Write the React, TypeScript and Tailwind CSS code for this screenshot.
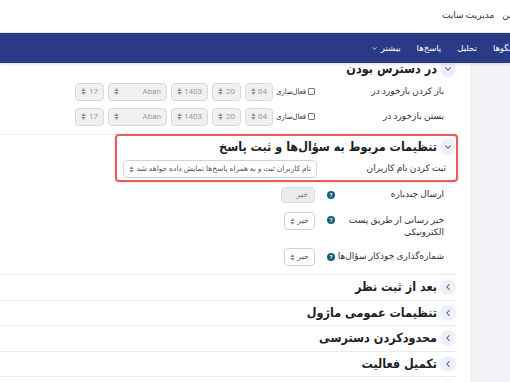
import { ChevronDown, ChevronLeft } from "lucide-react";

function Arrows() {
  return (
    <svg width="5" height="7" viewBox="0 0 5 7" className="shrink-0">
      <path d="M0.3 2.9 L2.5 0.3 L4.7 2.9 Z" fill="#8a8a8a" />
      <path d="M0.3 4.1 L2.5 6.7 L4.7 4.1 Z" fill="#8a8a8a" />
    </svg>
  );
}

function DateSelect({ value, width }: { value: string; width: string }) {
  return (
    <div
      className={`${width} h-[18px] shrink-0 flex items-center justify-between px-[5px] rounded-[4px] border border-[#d8dadd] bg-[#eff0f2] text-[8px] text-[#9c9c9c]`}
    >
      <span>{value}</span>
      <Arrows />
    </div>
  );
}

function SmallSelect({ value }: { value: string }) {
  return (
    <div className="w-[31px] h-[18px] shrink-0 flex items-center justify-between px-[5px] rounded-[4px] border border-[#cfd3d8] bg-white text-[8px] text-[#555]">
      <span>{value}</span>
      <Arrows />
    </div>
  );
}

function HelpIcon() {
  return (
    <span className="mr-auto w-[8px] h-[8px] rounded-full bg-[#17607a] text-white text-[6px] font-bold leading-none flex items-center justify-center">
      ?
    </span>
  );
}

function SectionHead({ title, open }: { title: string; open?: boolean }) {
  return (
    <div className="flex items-center gap-[3px]">
      <span className="w-[16px] h-[16px] rounded-full bg-[#eef0f7] flex items-center justify-center shrink-0">
        {open ? (
          <ChevronDown size={10} strokeWidth={2.5} color="#3b4a9e" />
        ) : (
          <ChevronLeft size={10} strokeWidth={2.5} color="#3b4a9e" />
        )}
      </span>
      <h3 className="text-[12.5px] font-bold text-[#1d2125] leading-none whitespace-nowrap font-['DejaVu_Sans_Condensed','DejaVu_Sans',sans-serif]">
        {title}
      </h3>
    </div>
  );
}

function DateRow({ label }: { label: string }) {
  return (
    <div className="h-[25px] flex items-center">
      <div className="w-[141px] shrink-0 pr-[12px] pl-[12px] text-[9px] text-[#333]">{label}</div>
      <div className="flex items-center gap-[4px]">
        <span className="w-[38px] shrink-0 flex items-center gap-[2px]">
          <span className="w-[7px] h-[7px] border border-[#777] rounded-[1px] bg-white shrink-0" />
          <span className="text-[7.5px] text-[#333] whitespace-nowrap font-['DejaVu_Sans_Condensed','DejaVu_Sans',sans-serif]">
            فعال‌سازی
          </span>
        </span>
        <DateSelect value="04" width="w-[28px]" />
        <DateSelect value="20" width="w-[29px]" />
        <DateSelect value="1403" width="w-[37px]" />
        <DateSelect value="Aban" width="w-[59px]" />
        <DateSelect value="17" width="w-[29px]" />
      </div>
    </div>
  );
}

const collapsed = ["بعد از ثبت نظر", "تنظیمات عمومی ماژول", "محدودکردن دسترسی", "تکمیل فعالیت", "برچسب‌ها"];

export default function App() {
  return (
    <div
      dir="rtl"
      className="w-[510px] h-[382px] overflow-hidden bg-white flex flex-col font-['Roboto','DejaVu_Sans',sans-serif]"
    >
      {/* top bar */}
      <div className="h-[33px] shrink-0 border-b border-[#e6e6e6] flex items-center gap-[8px] text-[9px] text-[#333]">
        <span className="-mr-[40px]">درس‌های من</span>
        <span>مدیریت سایت</span>
      </div>

      {/* navbar */}
      <div className="relative z-10 h-[30px] shrink-0 bg-[#2b3a86] flex items-center gap-[16px] text-[8.5px] text-white shadow-[0_2px_2px_rgba(0,0,0,0.1)]">
        <span className="-mr-[4px]">الگوها</span>
        <span>تحلیل</span>
        <span>پاسخ‌ها</span>
        <span className="flex items-center gap-[3px]">
          بیشتر
          <ChevronDown size={7} strokeWidth={2.5} />
        </span>
      </div>

      {/* main */}
      <div className="flex-1 flex gap-[14px] overflow-hidden">
        <div className="w-[40px] shrink-0 bg-[#f2f3f7]" />

        <div className="w-[456px] shrink-0 flex flex-col">
          {/* section 1 */}
          <div className="pb-[5px]">
            <div className="-mt-[4px] h-[20px] flex items-center">
              <SectionHead title="در دسترس بودن" open />
            </div>
            <DateRow label="باز کردن بازخورد در" />
            <DateRow label="بستن بازخورد در" />
          </div>

          {/* section 2 */}
          <div className="border-t border-[#ececec] pb-[4px]">
            <div className="-mt-[1px] -mr-[2px] ml-[115px] border-2 border-[#e35e5e] rounded-[4px] shadow-[0_0_2px_rgba(227,94,94,0.5)]">
              <div className="h-[22px] flex items-center">
                <SectionHead title="تنظیمات مربوط به سؤال‌ها و ثبت پاسخ" open />
              </div>
              <div className="h-[22px] flex items-center">
                <div className="w-[139px] shrink-0 pr-[10px] pl-[12px] text-[9px] text-[#333]">ثبت کردن نام کاربران</div>
                <div className="w-[194px] h-[18px] flex items-center gap-[3px] px-[5px] rounded-[4px] border border-[#cfd3d8] bg-white text-[7.5px] text-[#555] whitespace-nowrap">
                  <span className="flex-1 min-w-0 overflow-hidden">نام کاربران ثبت و به همراه پاسخ‌ها نمایش داده خواهد شد</span>
                  <Arrows />
                </div>
              </div>
            </div>

            <div className="h-[26px] flex items-center">
              <div className="w-[141px] shrink-0 pr-[12px] pl-[12px] flex items-center text-[9px] text-[#333]">
                <span>ارسال چندباره</span>
                <HelpIcon />
              </div>
              <div className="w-[34px] h-[16px] flex items-center px-[6px] rounded-[4px] border border-[#d8dadd] bg-[#e9ecef] text-[8px] text-[#777]">
                خیر
              </div>
            </div>

            <div className="h-[36px] flex items-start pt-[4px]">
              <div className="w-[141px] shrink-0 pr-[12px] pl-[12px] pt-[2px] flex items-start text-[9px] leading-[12px] text-[#333]">
                <span>
                  خبر رسانی از طریق پست
                  <br />
                  الکترونیکی
                </span>
                <span className="mr-auto mt-[2px]">
                  <HelpIcon />
                </span>
              </div>
              <SmallSelect value="خیر" />
            </div>

            <div className="h-[26px] flex items-center">
              <div className="w-[141px] shrink-0 pr-[12px] pl-[12px] flex items-center text-[9px] text-[#333]">
                <span className="whitespace-nowrap">شماره‌گذاری خودکار سؤال‌ها</span>
                <HelpIcon />
              </div>
              <SmallSelect value="خیر" />
            </div>
          </div>

          {collapsed.map((t) => (
            <div key={t} className="h-[25.5px] shrink-0 border-t border-[#ececec] flex items-center">
              <SectionHead title={t} />
            </div>
          ))}
        </div>
      </div>
    </div>
  );
}
